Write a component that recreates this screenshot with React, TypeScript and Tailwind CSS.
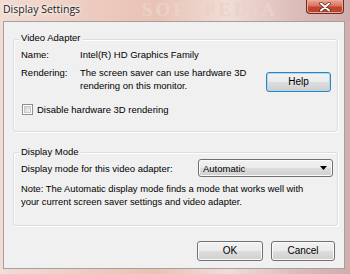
import React from "react";

const btnBg =
  "bg-[linear-gradient(to_bottom,#f2f2f2_0%,#ebebeb_48%,#dddddd_52%,#cfcfcf_100%)]";

function Button({ children, def = false, className = "" }: { children: React.ReactNode; def?: boolean; className?: string }) {
  return (
    <div
      className={
        "flex items-center justify-center rounded-[3px] border text-[10px] leading-none text-black " +
        btnBg +
        " " +
        (def
          ? "border-[#3c7fb1] shadow-[inset_0_0_0_1px_#9fdcf6]"
          : "border-[#707070] shadow-[inset_0_0_0_1px_#fbfbfb]") +
        " " +
        className
      }
    >
      {children}
    </div>
  );
}

export default function App() {
  return (
    <div
      className="relative flex h-[274px] w-[350px] flex-col overflow-hidden bg-[linear-gradient(to_right,#f2dcd4_0%,#ecc9bc_30%,#e9c3b4_45%,#f0dcd6_65%,#dcbcb8_85%,#cfaeae_100%)]"
      style={{ fontFamily: '"Liberation Sans", Arial, sans-serif' }}
    >
      {/* watermark in title bar */}
      <div className="pointer-events-none absolute left-[142px] top-[0px] font-bold tracking-[3px] text-[19px] leading-[20px] text-[#ebd2c8] [font-family:'Liberation_Serif',serif]">
        SOFTPEDIA
      </div>

      {/* title bar */}
      <div className="relative flex h-[21px] shrink-0 items-start justify-between pl-[3px] pr-[6px]">
        <span
          className="mt-[2px] text-[10.5px] leading-[14px] text-[#1b1b1b] [text-shadow:0_0_5px_#fff,0_0_3px_#fff]"
          style={{ fontFamily: '"Open Sans", "Liberation Sans", sans-serif' }}
        >
          Display Settings
        </span>
        <div className="flex h-[14px] w-[38px] items-center justify-center rounded-b-[4px] border border-t-0 border-[#6e2a20] bg-[linear-gradient(to_bottom,#e9a796_0%,#d9735f_45%,#c2442e_55%,#b8442f_100%)] shadow-[inset_0_0_0_1px_#eea898]">
          <svg width="12" height="10" viewBox="0 0 12 10">
            <path d="M2 1.5 L10 8.5 M10 1.5 L2 8.5" stroke="#5a1f16" strokeWidth="3.4" strokeLinecap="round" />
            <path d="M2 1.5 L10 8.5 M10 1.5 L2 8.5" stroke="#ffffff" strokeWidth="2" strokeLinecap="round" />
          </svg>
        </div>
      </div>

      {/* client area */}
      <div className="ml-[3px] mr-[5px] flex h-[248px] shrink-0 flex-col border border-[#a4a0a2] bg-[#f0f0f0] pl-[9px] pr-[6px] pt-[17px] text-[9.5px] leading-[13px] text-black">
        {/* Video Adapter group */}
        <div className="relative flex h-[93px] shrink-0 flex-col rounded-[3px] border border-[#d5dfe5] pl-[7px] pr-[6px] pt-[8px] shadow-[inset_1px_1px_0_#fff,1px_1px_0_#fff]">
          <span className="absolute left-[5px] top-[-9px] bg-[#f0f0f0] px-[2px]">Video Adapter</span>
          <div className="flex">
            <span className="w-[59px] shrink-0">Name:</span>
            <span>Intel(R) HD Graphics Family</span>
          </div>
          <div className="mt-[5px] flex items-start">
            <span className="w-[59px] shrink-0">Rendering:</span>
            <span className="flex-1">
              The screen saver can use hardware 3D
              <br />
              rendering on this monitor.
            </span>
            <Button def className="mt-[6px] h-[20px] w-[65px]">
              Help
            </Button>
          </div>
          <div className="mt-[11px] flex items-center pl-[1px]">
            <div className="flex h-[11px] w-[11px] items-center justify-center border border-[#8e8f8f] bg-white">
              <div className="h-[7px] w-[7px] border border-[#c4c7cc] bg-[linear-gradient(135deg,#cbcfd5,#f4f4f4)]" />
            </div>
            <span className="ml-[4px]">Disable hardware 3D rendering</span>
          </div>
        </div>

        {/* Display Mode group */}
        <div className="relative mt-[20px] flex h-[74px] shrink-0 flex-col rounded-[3px] border border-[#d5dfe5] pl-[7px] pr-[4px] pt-[6px] shadow-[inset_1px_1px_0_#fff,1px_1px_0_#fff]">
          <span className="absolute left-[5px] top-[-8px] bg-[#f0f0f0] px-[2px]">Display Mode</span>
          <div className="flex items-center justify-between">
            <span>Display mode for this video adapter:</span>
            <div
              className={
                "flex h-[18px] w-[135px] items-center justify-between rounded-[3px] border border-[#707070] pl-[4px] pr-[5px] shadow-[inset_0_0_0_1px_#fbfbfb] " +
                btnBg
              }
            >
              <span>Automatic</span>
              <svg width="7" height="4" viewBox="0 0 7 4">
                <path d="M0 0 L7 0 L3.5 4 Z" fill="#000" />
              </svg>
            </div>
          </div>
          <div className="mt-[5px] text-[9.4px]">
            Note: The Automatic display mode finds a mode that works well with
            <br />
            your current screen saver settings and video adapter.
          </div>
        </div>

        {/* buttons */}
        <div className="mr-[3px] mt-[15px] flex justify-end gap-[8px]">
          <Button className="h-[20px] w-[66px]">OK</Button>
          <Button className="h-[20px] w-[64px]">Cancel</Button>
        </div>
      </div>
    </div>
  );
}
